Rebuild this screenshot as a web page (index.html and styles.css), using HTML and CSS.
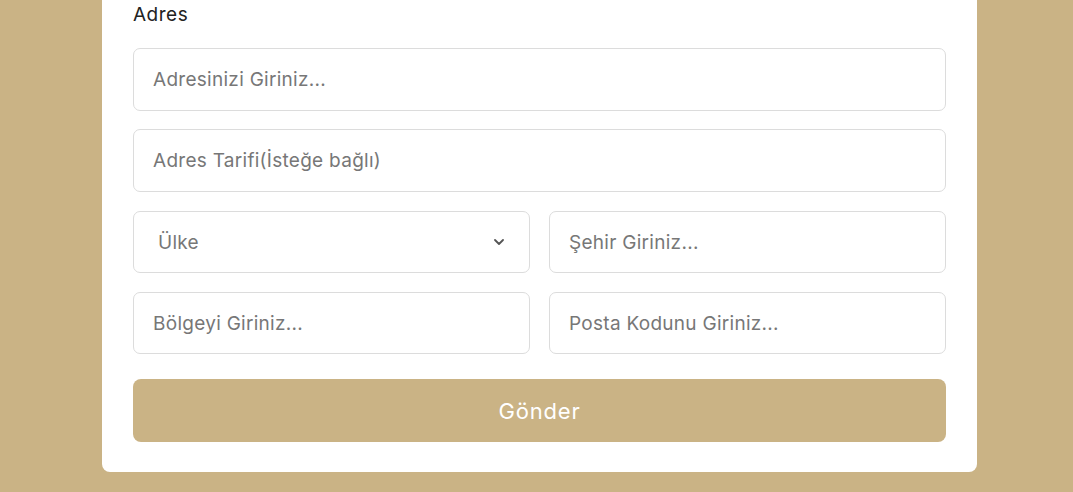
FILE: index.html
```html
<!DOCTYPE html>
<html lang="tr">
<head>
<meta charset="utf-8">
<title>Adres</title>
<link rel="stylesheet" href="styles.css">
</head>
<body>
<div class="page">
  <form class="card">
    <label class="label">Adres</label>
    <div class="field wide first">Adresinizi Giriniz...</div>
    <div class="field wide">Adres Tarifi(İsteğe bağlı)</div>
    <div class="row">
      <div class="field select"><span class="sel-text">Ülke</span>
        <svg class="chev" width="10" height="6" viewBox="0 0 10 6"><path d="M1 1 L5 5 L9 1" fill="none" stroke="#555" stroke-width="1.8" stroke-linecap="round" stroke-linejoin="round"/></svg>
      </div>
      <div class="field">Şehir Giriniz...</div>
    </div>
    <div class="row">
      <div class="field">Bölgeyi Giriniz...</div>
      <div class="field">Posta Kodunu Giriniz...</div>
    </div>
    <div class="button">Gönder</div>
  </form>
</div>
</body>
</html>
```
FILE: styles.css
```css
html, body { margin: 0; padding: 0; }
body {
  background: #cab385;
  font-family: "Inter", "Noto Sans", sans-serif;
  height: 492px;
  overflow: hidden;
}
.page {
  display: flex;
  justify-content: center;
}
.card {
  width: 875px;
  margin-left: 6px;
  background: #fff;
  border-radius: 0 0 8px 8px;
  padding: 0 31px 30px;
  box-sizing: border-box;
  display: flex;
  flex-direction: column;
  gap: 19px;
}
.label {
  font-size: 19px;
  letter-spacing: 0.5px;
  color: #222;
  line-height: 29px;
}
.field {
  height: 62px;
  box-sizing: border-box;
  border: 1px solid #dcdcdc;
  border-radius: 7px;
  padding: 0 19px;
  display: flex;
  align-items: center;
  font-size: 19px;
  letter-spacing: 0.28px;
  color: #777;
}
.field.wide { height: 63px; }
.field.first { margin-bottom: -1px; }
.row {
  display: grid;
  grid-template-columns: 1fr 1fr;
  gap: 19px;
}
.select { padding-left: 24px; padding-right: 25px; justify-content: space-between; }
.button {
  margin-top: 6px;
  height: 63px;
  border-radius: 8px;
  background: #cab385;
  color: #fff;
  font-size: 22px;
  letter-spacing: 0.8px;
  display: flex;
  align-items: center;
  justify-content: center;
}
```
